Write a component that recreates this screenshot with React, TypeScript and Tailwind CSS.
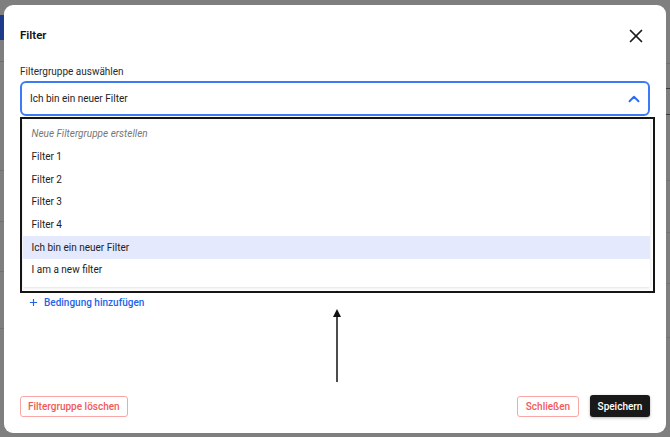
import React from "react";

const items = [
  { label: "Neue Filtergruppe erstellen", placeholder: true },
  { label: "Filter 1" },
  { label: "Filter 2" },
  { label: "Filter 3" },
  { label: "Filter 4" },
  { label: "Ich bin ein neuer Filter", active: true },
  { label: "I am a new filter" },
];

export default function App() {
  return (
    <div
      className="relative w-[670px] h-[437px] overflow-hidden bg-[#7f7f7f]"
      style={{ fontFamily: "Roboto, 'Liberation Sans', sans-serif" }}
    >
      {/* page behind the overlay */}
      <div className="flex justify-between h-full">
        <div className="w-[4px] flex flex-col pt-[15px]">
          <div className="h-[25px] bg-[#1e3a8a]" />
          <div className="h-[22px] border-b border-[#6e6e6e]" />
          <div className="h-[109px] border-b border-[#727272]" />
          <div className="h-[51px] border-b border-[#727272]" />
          <div className="h-[50px] border-b border-[#727272]" />
          <div className="h-[57px] border-b border-[#727272]" />
        </div>
        <div className="w-[5px] flex flex-col pt-[63px]">
          <div className="h-[25px] border-t border-[#707070]" />
          <div className="h-[26px] border-t border-[#3a3a3a]" />
          <div className="h-[66px] border-t border-[#3a3a3a]" />
          <div className="h-[52px] border-t border-[#737373]" />
          <div className="h-[51px] border-t border-[#737373]" />
          <div className="h-[54px] border-t border-[#737373]" />
          <div className="h-[20px] border-t border-[#737373]" />
        </div>
      </div>

      {/* modal */}
      <div className="absolute left-[4px] top-[5px] w-[662px] h-[428px] bg-white rounded-[9px] flex flex-col px-4 pt-[23px] pb-4">
        <div className="flex items-center justify-between h-[15px]">
          <h2 className="text-[11.5px] leading-[15px] font-semibold text-[#111]">Filter</h2>
          <svg width="22" height="22" viewBox="0 0 24 24" fill="none" stroke="#1a1a1a" strokeWidth="1.9" strokeLinecap="round" className="mr-[3.5px]">
            <path d="M18 6 6 18" />
            <path d="m6 6 12 12" />
          </svg>
        </div>

        <label className="mt-[23px] text-[10px] leading-[12px] text-[#2b2b2b]">Filtergruppe auswählen</label>

        <div className="relative mt-[3px]">
          <div className="h-[35px] rounded-[6px] border-2 border-[#3b7cf6] flex items-center justify-between pl-[8px] pr-[5px]">
            <span className="text-[10px] text-[#222]">Ich bin ein neuer Filter</span>
            <svg width="18" height="18" viewBox="0 0 24 24" fill="none" stroke="#2f6df0" strokeWidth="2.6" strokeLinecap="round" strokeLinejoin="round">
              <path d="m18 15-6-6-6 6" />
            </svg>
          </div>

          {/* dropdown menu */}
          <div className="absolute left-0 top-[36px] w-[635px] h-[176px] border-2 border-[#151515] bg-white z-10">
            <div className="ml-[0.5px] mr-[3px] mt-[1px] bg-white shadow-[0_1px_3px_rgba(0,0,0,0.12)] pt-[2.5px] pb-[6px]">
              {items.map((it) => (
                <div
                  key={it.label}
                  className={
                    "h-[22.7px] flex items-center pl-[9px] text-[10px] " +
                    (it.active ? "bg-[#e4e9fd] " : "") +
                    (it.placeholder ? "italic text-[#777]" : "text-[#222]")
                  }
                >
                  {it.label}
                </div>
              ))}
            </div>
          </div>
        </div>

        <div className="mt-[179px] flex items-center h-[14px] pl-[9px] text-[#2563eb]">
          <svg width="9" height="9" viewBox="0 0 10 10" fill="none" stroke="#2563eb" strokeWidth="1.3">
            <path d="M5 1v8M1 5h8" />
          </svg>
          <span className="ml-[6px] text-[10px] font-medium">Bedingung hinzufügen</span>
        </div>

        <div className="mt-auto flex items-center justify-between">
          <button className="h-[21px] px-[7px] rounded-[3px] border border-[#fca5a5] text-[10px] font-medium text-[#f05a5a] bg-white">
            Filtergruppe löschen
          </button>
          <div className="flex items-center gap-[11px]">
            <button className="h-[21px] w-[62px] rounded-[3px] border border-[#fca5a5] text-[10px] font-medium text-[#f05a5a] bg-white">
              Schließen
            </button>
            <button className="h-[22px] w-[60px] rounded-[3px] bg-[#191919] text-[10px] font-medium text-white shadow-[0_1px_3px_rgba(0,0,0,0.3)]">
              Speichern
            </button>
          </div>
        </div>
      </div>

      {/* annotation arrow */}
      <svg className="absolute left-[332px] top-[309px]" width="10" height="74" viewBox="0 0 10 74">
        <path d="M5 0 L9 8 L1 8 Z" fill="#111" />
        <path d="M5 7 V73" stroke="#111" strokeWidth="1.5" />
      </svg>
    </div>
  );
}
